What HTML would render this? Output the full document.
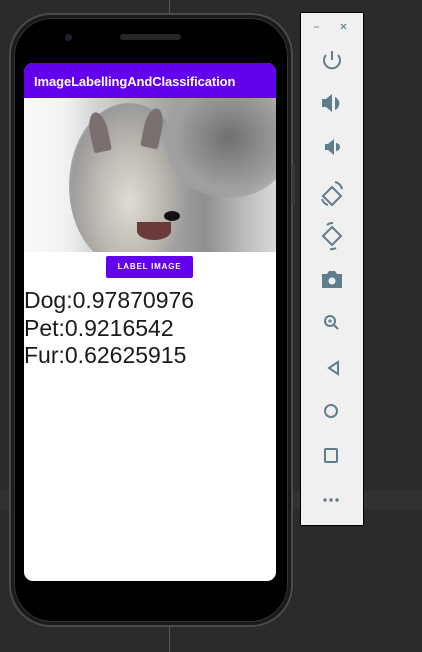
<!DOCTYPE html>
<html><head><style>
*{margin:0;padding:0;box-sizing:border-box}
body{width:422px;height:652px;background:#2b2b2b;position:relative;overflow:hidden;font-family:"Liberation Sans",Roboto,sans-serif}
.abs{position:absolute}
</style></head><body>
<div class="abs" style="left:0;top:490px;width:422px;height:20px;background:#313131"></div>
<div class="abs" style="left:169px;top:0;width:1px;height:14px;background:#555"></div>
<div class="abs" style="left:169px;top:627px;width:1px;height:25px;background:#555"></div>
<div class="abs" style="left:9px;top:13px;width:284px;height:614px;border-radius:42px;background:#1a1a1a;border:2px solid #4a4a4a"></div>
<div class="abs" style="left:14px;top:18px;width:274px;height:604px;border-radius:38px;background:#000;border:1px solid #333"></div>
<div class="abs" style="left:292px;top:165px;width:3px;height:40px;background:#3a3a3a"></div>
<div class="abs" style="left:65px;top:34px;width:7px;height:7px;border-radius:50%;background:#1c2030"></div>
<div class="abs" style="left:120px;top:34px;width:61px;height:6px;border-radius:3px;background:#262626"></div>
<div class="abs" style="left:24px;top:63px;width:252px;height:518px;border-radius:9px;background:#fff;overflow:hidden">
  <div style="height:35px;background:#6200ee;color:#fff;font-size:13px;font-weight:bold;padding:11px 0 0 10px;letter-spacing:-0.1px">ImageLabellingAndClassification</div>
  <div style="position:relative;height:154px;background:linear-gradient(90deg,#f4f5f7 0%,#eceef0 18%,#d0d0d0 30%,#a8a8a8 55%,#8f8f8f 72%,#bdbdbd 88%,#d8d8d8 100%);overflow:hidden">
    <div class="abs" style="left:45px;top:5px;width:120px;height:165px;border-radius:50%;background:radial-gradient(ellipse at 50% 60%,#e0dcd4 0%,#bdb8b0 40%,#9a9a9a 70%,rgba(160,160,160,0) 100%)"></div>
    <div class="abs" style="left:140px;top:-20px;width:130px;height:120px;border-radius:50%;background:radial-gradient(#707070,#a0a0a0 60%,rgba(190,190,190,0))"></div>
    <div class="abs" style="left:66px;top:14px;width:18px;height:40px;background:#7a7070;border-radius:50% 50% 10% 10%;transform:rotate(-12deg)"></div>
    <div class="abs" style="left:120px;top:10px;width:18px;height:40px;background:#7a7070;border-radius:50% 50% 10% 10%;transform:rotate(12deg)"></div>
    <div class="abs" style="left:140px;top:113px;width:16px;height:10px;border-radius:50%;background:#111"></div>
    <div class="abs" style="left:113px;top:124px;width:34px;height:18px;border-radius:0 0 50% 50%;background:#6b3b3b"></div>
    <div class="abs" style="left:0;top:0;width:50px;height:154px;background:linear-gradient(90deg,#f8f9fb,rgba(240,242,245,0))"></div>
  </div>
  <div class="abs" style="left:82px;top:193px;width:87px;height:22px;background:#6200ee;border-radius:2px;color:#fff;font-size:8px;font-weight:bold;letter-spacing:0.8px;text-align:center;line-height:22px">LABEL IMAGE</div>
  <div class="abs" style="left:0;top:224px;font-size:23px;line-height:27.5px;color:#1a1a1a">Dog:0.97870976<br>Pet:0.9216542<br>Fur:0.62625915</div>
</div>
<div class="abs" style="left:300px;top:12px;width:64px;height:514px;background:#f0f0f0;border:1px solid #000"></div>
<svg class="abs" style="left:300px;top:12px" width="64" height="514" viewBox="0 0 64 514">
 <g stroke="#607d8b" fill="none" stroke-width="2">
  <line x1="14" y1="15" x2="19" y2="15" stroke="#888" stroke-width="1"/>
  <path d="M41 12l5 5M46 12l-5 5" stroke="#607d8b" stroke-width="1.2"/>
  <path d="M26 43a8 8 0 1 0 12 0"/><line x1="32" y1="39" x2="32" y2="48"/>
  <path d="M23 184l9-9 9 9-9 9z"/><path d="M35 170a9 9 0 0 1 7 7M22 187a9 9 0 0 0 6 6"/>
  <path d="M23 224l9-9 9 9-9 9z"/><path d="M27 213a9 9 0 0 1 6-2M36 236a9 9 0 0 1-6 1"/>
  <circle cx="30" cy="309" r="5"/><line x1="34" y1="313" x2="38" y2="317"/>
  <path d="M28 309h4M30 307v4" stroke-width="1.2"/>
  <path d="M38 350l-9 6 9 6z"/>
  <circle cx="31" cy="399" r="6"/>
  <rect x="25" y="437" width="12" height="13" rx="1"/>
 </g>
 <g fill="#607d8b">
  <path d="M22 87h4l6-5v18l-6-5h-4z"/><path d="M35 85a7 7 0 0 1 0 13z"/>
  <path d="M25 132h3l6-5v16l-6-5h-3z"/><path d="M36 131a4 4 0 0 1 0 8z"/>
  <path d="M22 262h20v14h-20z M27 262l2-3h6l2 3z"/>
  <circle cx="25" cy="488" r="1.7"/><circle cx="31" cy="488" r="1.7"/><circle cx="37" cy="488" r="1.7"/>
 </g>
 <circle cx="32" cy="269" r="3.5" fill="#f0f0f0"/>
</svg>
</body></html>
